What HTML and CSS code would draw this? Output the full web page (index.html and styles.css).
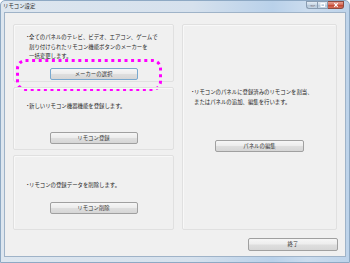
FILE: index.html
```html
<!DOCTYPE html>
<html lang="ja">
<head>
<meta charset="utf-8">
<link rel="stylesheet" href="styles.css">
</head>
<body>
<div class="window">
  <div class="titlebar">
    <span class="title">リモコン設定</span>
    <div class="controls">
      <span class="ctl min"><svg width="9" height="6" viewBox="0 0 9 6"><rect x="3" y="3.5" width="3.5" height="1.2" fill="#fff" stroke="#556" stroke-width="0.4"/></svg></span>
      <span class="ctl max"><svg width="9" height="6" viewBox="0 0 9 6"><rect x="3" y="1.5" width="3.5" height="3" fill="none" stroke="#fff" stroke-width="1"/></svg></span>
      <span class="ctl close"><svg width="14" height="6" viewBox="0 0 14 6"><path d="M5.3 1.2 L8.7 4.8 M8.7 1.2 L5.3 4.8" stroke="#fff" stroke-width="1.2"/></svg></span>
    </div>
  </div>
  <div class="client">
    <div class="main">
      <div class="leftcol">
        <section class="panel p1">
          <p class="desc"><span class="dot">・</span>全てのパネルのテレビ、ビデオ、エアコン、ゲームで<br>割り付けられたリモコン機能ボタンのメーカーを<br>一括変更します。</p>
          <button class="btn default">メーカーの選択</button>
          <div class="highlight"><svg width="146" height="32" viewBox="0 0 146 32"><rect x="1.5" y="1.5" width="143" height="29" rx="8" ry="8" fill="none" stroke="#ff00ff" stroke-width="3" stroke-dasharray="3 3.6"/></svg></div>
        </section>
        <section class="panel p2">
          <p class="desc"><span class="dot">・</span>新しいリモコン機器機能を登録します。</p>
          <button class="btn">リモコン登録</button>
        </section>
        <section class="panel p3">
          <p class="desc"><span class="dot">・</span>リモコンの登録データを削除します。</p>
          <button class="btn">リモコン削除</button>
        </section>
      </div>
      <section class="panel right">
        <p class="desc"><span class="dot">・</span>リモコンのパネルに登録済みのリモコンを割当、<br>またはパネルの追加、編集を行います。</p>
        <button class="btn">パネルの編集</button>
      </section>
    </div>
    <div class="footer">
      <button class="btn end">終了</button>
    </div>
  </div>
</div>
</body>
</html>
```
FILE: styles.css
```css
html, body {
  margin: 0;
  padding: 0;
  width: 350px;
  height: 263px;
  overflow: hidden;
  background: #ffffff;
}

body {
  font-family: "Noto Sans CJK JP", "Noto Sans", sans-serif;
}

.window {
  width: 350px;
  height: 263px;
  box-sizing: border-box;
  display: flex;
  flex-direction: column;
  padding: 0 3px 5px;
  border: 1px solid #8ea9c4;
  border-radius: 5px 5px 0 0;
  background: linear-gradient(to right, #dde6ef 0%, #d6e1ed 55%, #b9d1ea 78%, #cbdcee 88%, #bdd3ea 100%);
}

.titlebar {
  height: 11px;
  flex: none;
  display: flex;
  align-items: flex-start;
}

.title {
  margin-left: -1px;
  font-size: 5.4px;
  line-height: 11px;
  color: #2a2a2a;
}

.controls {
  margin-left: auto;
  margin-right: 2px;
  display: flex;
}

.ctl {
  height: 8px;
  box-sizing: border-box;
  display: flex;
  align-items: center;
  justify-content: center;
  border: 1px solid #8a9db2;
  background: linear-gradient(#e4ecf4, #c8d6e4 50%, #b4c6d8 51%, #c4d4e4);
}

.ctl.min {
  width: 11px;
  border-radius: 0 0 0 3px;
  border-right: none;
}

.ctl.max {
  width: 11px;
}

.ctl.close {
  width: 16px;
  border-left: none;
  border-color: #8c4a40;
  border-radius: 0 0 3px 0;
  background: linear-gradient(#e8a092, #d36a58 50%, #c2452f 51%, #d4705c);
}

.ctl svg {
  display: block;
}

.client {
  flex: 1;
  display: flex;
  flex-direction: column;
  padding: 11px 8px 0;
  background: #f0f0f0;
  border: 1px solid #9fb3c8;
}

.main {
  height: 206px;
  flex: none;
  display: flex;
  gap: 8px;
}

.leftcol {
  width: 161px;
  display: flex;
  flex-direction: column;
  gap: 5px;
}

.panel {
  position: relative;
  box-sizing: border-box;
  border: 1px solid #e0e0e0;
  border-radius: 2px;
  box-shadow: inset 1px 1px 0 #f8f8f8;
}

.leftcol .panel {
  flex: 1;
}

.panel.right {
  width: 155px;
  padding-top: 63px;
}

.desc {
  margin: 0 0 0 11px;
  padding-left: 4px;
  text-indent: -4px;
  font-size: 5.4px;
  line-height: 9.5px;
  color: #1e1e1e;
  white-space: nowrap;
}

.dot {
  letter-spacing: -1.4px;
}

.panel.right .desc {
  margin-left: 7px;
}

.p1 { padding-top: 8px; }
.p2 { padding-top: 14px; }
.p3 { padding-top: 25px; }

.btn {
  display: block;
  width: 88px;
  height: 12px;
  margin: 0 auto;
  padding: 0;
  box-sizing: border-box;
  border: 1px solid #a0a0a0;
  border-radius: 2px;
  background: linear-gradient(#f6f6f6 0%, #ededed 45%, #dedede 55%, #d6d6d6 100%);
  font-family: "Noto Sans CJK JP", "Noto Sans", sans-serif;
  font-size: 5.4px;
  line-height: 10px;
  color: #333333;
}

.btn.default {
  border-color: #79a9cf;
}

.p1 .btn { margin-top: 6px; }
.p2 .btn { margin-top: 21px; }
.p3 .btn { margin-top: 11px; }
.panel.right .btn { margin-top: 33px; width: 89px; }

.highlight {
  position: absolute;
  left: 2px;
  top: 34px;
  width: 146px;
  height: 32px;
}

.highlight svg {
  display: block;
}

.footer {
  display: flex;
  justify-content: flex-end;
  margin-top: 8px;
  margin-right: -1px;
}

.btn.end {
  width: 90px;
  height: 13px;
  margin: 0;
  line-height: 11px;
}
```
